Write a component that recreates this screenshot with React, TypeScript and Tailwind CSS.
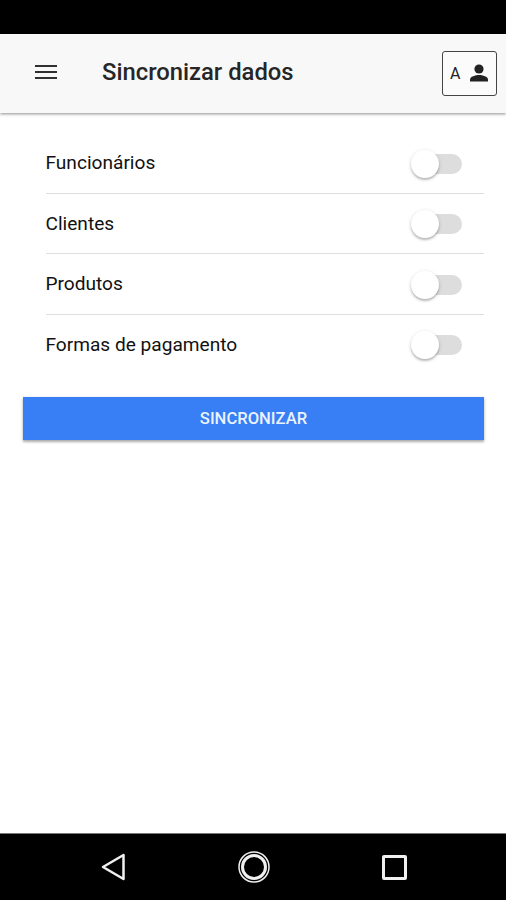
import React, { useState } from 'react';

interface SyncRowProps {
  label: string;
  checked: boolean;
  last?: boolean;
  onToggle: () => void;
}

const SyncRow: React.FC<SyncRowProps> = ({ label, checked, last, onToggle }) => {
  return (
    <div className={`flex h-[60.4px] items-center justify-between pr-[22px] ${last ? '' : 'border-b border-[#dedede]'}`}>
      <span className="text-[19.1px] leading-6 text-[#111111]">{label}</span>
      <button
        role="switch"
        aria-checked={checked}
        aria-label={label}
        onClick={onToggle}
        className={`mt-px flex h-5 w-[51px] items-center rounded-full bg-linear-to-r from-transparent from-30% to-30% ${checked ? 'justify-end to-[#a9c8fb]' : 'to-[#dddddd]'}`}
      >
        <span className="h-[28px] w-[28px] shrink-0 rounded-full bg-white shadow-[0_2px_2px_rgba(0,0,0,0.2),0_1px_4px_rgba(0,0,0,0.14)]" />
      </button>
    </div>
  );
};

const options = ['Funcionários', 'Clientes', 'Produtos', 'Formas de pagamento'];

export default function App() {
  const [selected, setSelected] = useState<string[]>([]);

  const toggle = (name: string) => {
    setSelected(selected.includes(name) ? selected.filter((s) => s !== name) : [...selected, name]);
  };

  return (
    <div className="flex h-[900px] w-[506px] flex-col bg-white font-['Roboto',sans-serif]">
      <div className="h-[34px] shrink-0 bg-black" />

      <header className="flex h-[79px] shrink-0 items-center bg-[#f8f8f8] pl-[35px] pr-[9px] shadow-[0_1px_3px_rgba(0,0,0,0.45)]">
        <button aria-label="Menu" className="mb-[3px] flex w-[22px] flex-col gap-[4px]">
          <span className="h-[2px] bg-[#303030]" />
          <span className="h-[2px] bg-[#303030]" />
          <span className="h-[2px] bg-[#303030]" />
        </button>
        <h1 className="mb-[3px] ml-[45px] text-[23.8px] leading-8 font-medium text-[#262626]">Sincronizar dados</h1>
        <button className="ml-auto flex h-[45px] w-[55px] items-center rounded-[3px] border border-[#444444] bg-[#fbfbfb] pl-[7px]">
          <span className="text-[16px] leading-5 text-[#222222]">A</span>
          <svg className="mb-[2px] ml-[10px]" width="18" height="18" viewBox="0 0 18 18" fill="#222222">
            <circle cx="9" cy="5" r="4.6" />
            <path d="M0 17.5v-2C0 12.6 5.5 11 9 11s9 1.6 9 4.5v2z" />
          </svg>
        </button>
      </header>

      <main className="flex-1 pt-[20.6px] pl-[23px] pr-[22px]">
        <div className="pl-[22.5px]">
          {options.map((name, i) => (
            <SyncRow
              key={name}
              label={name}
              checked={selected.includes(name)}
              last={i === options.length - 1}
              onToggle={() => toggle(name)}
            />
          ))}
        </div>
        <button className="mt-[22px] flex h-[43px] w-full items-center justify-center bg-[#387ef5] pt-px text-[16.6px] font-medium text-[#eaf3ff] shadow-[0_2px_2px_rgba(0,0,0,0.25),0_1px_4px_rgba(0,0,0,0.15)]">
          SINCRONIZAR
        </button>
      </main>

      <nav className="flex h-[67px] shrink-0 items-center border-t border-[#777777] bg-black pl-[100px]">
        <svg width="28" height="32" viewBox="0 0 28 32" fill="none" stroke="#f0f0f0" strokeWidth="2.5" strokeLinejoin="round">
          <path d="M23.5 4v24L3 16z" />
        </svg>
        <svg className="ml-[108.5px]" width="34" height="34" viewBox="0 0 34 34" fill="none" stroke="#f0f0f0">
          <circle cx="17" cy="17" r="15" strokeWidth="1.5" />
          <circle cx="17" cy="17" r="11.5" strokeWidth="3" />
        </svg>
        <span className="ml-[111.5px] h-[25px] w-[25px] rounded-[2px] border-[3px] border-[#f0f0f0]" />
      </nav>
    </div>
  );
}
